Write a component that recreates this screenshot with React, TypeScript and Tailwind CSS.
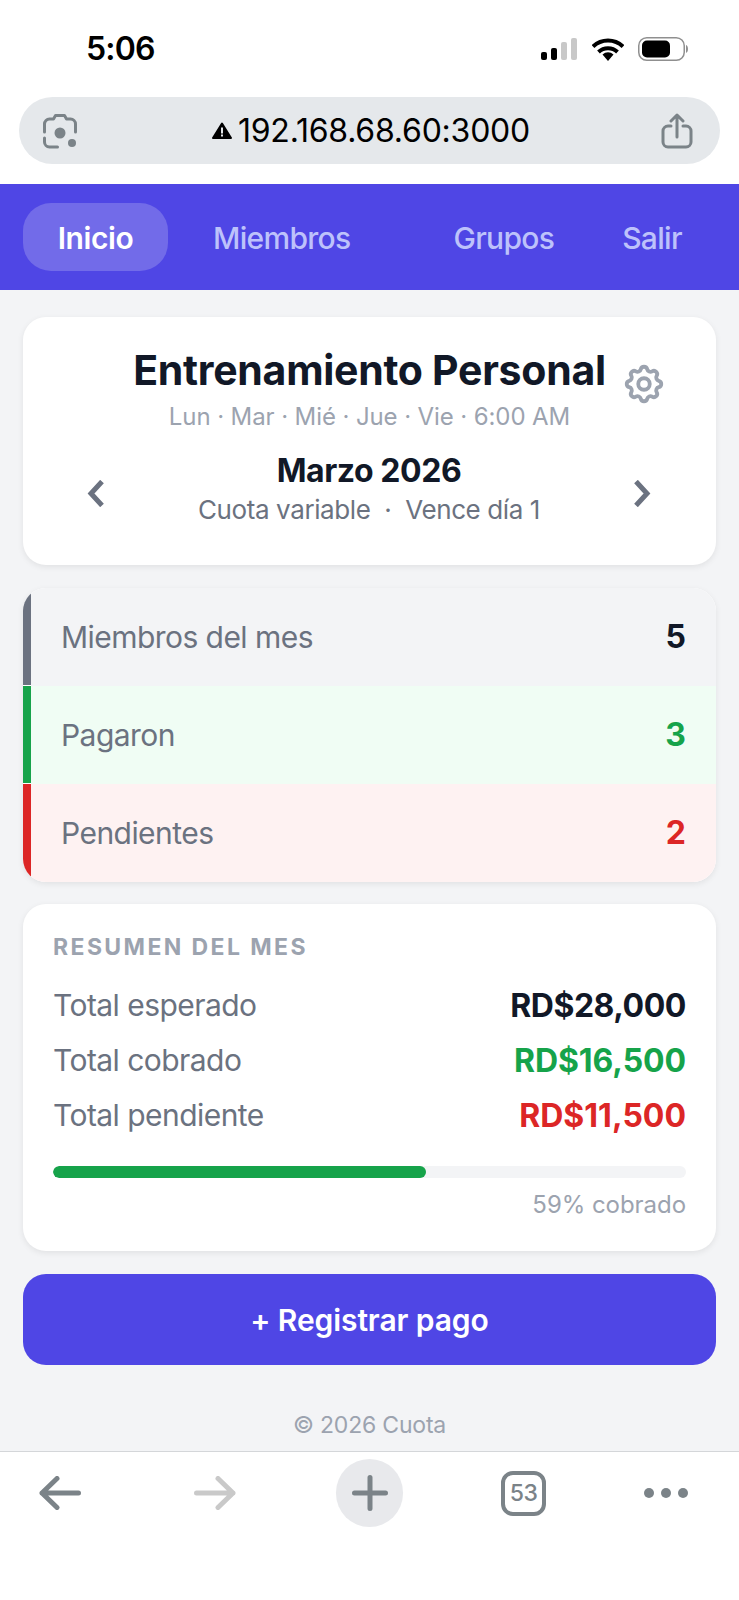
import { HiOutlineCog } from "react-icons/hi";

function Row({ label, value, bar, bg, color }: { label: string; value: string; bar: string; bg: string; color: string }) {
  return (
    <div className="flex h-[98px] bg-white">
      <div className={`h-[97px] w-[8px] ${bar}`} />
      <div className={`flex flex-1 justify-between pl-[30px] pr-[30px] pt-[31px] ${bg}`}>
        <span className="text-[30px] leading-[36px] tracking-[-0.55px] text-[#6b7280]">{label}</span>
        <span className={`text-[32px] leading-[36px] font-bold ${color}`}>{value}</span>
      </div>
    </div>
  );
}

function Total({ label, value, color }: { label: string; value: string; color: string }) {
  return (
    <div className="flex h-[55px] items-center justify-between">
      <span className="text-[30px] tracking-[-0.55px] text-[#6b7280]">{label}</span>
      <span className={`text-[32px] font-bold ${color}`}>{value}</span>
    </div>
  );
}

export default function App() {
  return (
    <div className="relative flex h-[1600px] w-[739px] flex-col overflow-hidden bg-[#f3f4f6] font-['Inter',sans-serif]">
      <div className="bg-white">
        <div className="flex h-[97px] items-center justify-between pl-[86px] pr-[51px] pt-[1px]">
          <span className="text-[32px] font-semibold tracking-[-0.8px] text-black">5:06</span>
          <div className="flex items-center">
            <svg width="36" height="24" viewBox="0 0 36 24">
              <rect x="0" y="15" width="6" height="8" rx="2" fill="#000" />
              <rect x="10" y="11" width="6" height="12" rx="2" fill="#000" />
              <rect x="20" y="5" width="6" height="18" rx="2" fill="#c8c8c8" />
              <rect x="30" y="1" width="6" height="22" rx="2" fill="#c8c8c8" />
            </svg>
            <svg className="ml-[15px]" width="32" height="24" viewBox="0 0 32 24">
              <path d="M16 24l-5.500-6.500a8 8 0 0 1 11 0z" fill="#000" />
              <path d="M1 9.500a21.500 21.500 0 0 1 30 0M6.500 15a14 14 0 0 1 19 0" stroke="#000" strokeWidth="4" fill="none" />
            </svg>
            <svg className="ml-[14px]" width="50" height="24" viewBox="0 0 50 24">
              <rect x="0.750" y="0.750" width="45.500" height="22.500" rx="8" fill="none" stroke="#8f8f8f" strokeWidth="1.500" />
              <rect x="4" y="3.500" width="28" height="17" rx="5" fill="#000" />
              <path d="M48 8c1.400.6 2 2.200 2 4s-.6 3.400-2 4z" fill="#8f8f8f" />
            </svg>
          </div>
        </div>
        <div className="mx-[19px] flex h-[67px] items-center justify-between rounded-[34px] bg-[#e5e8eb] pl-[23px] pr-[27px]">
          <svg width="36" height="36" viewBox="0 0 36 36" fill="none" stroke="#7b8388" strokeWidth="3" strokeLinecap="round" strokeLinejoin="round">
            <path d="M2.500 19v-8a5 5 0 0 1 5-5h4l2-3.500h9l2 3.500h4a5 5 0 0 1 5 5v8" />
            <path d="M2.500 25v4a5 5 0 0 0 5 5h8" />
            <circle cx="18" cy="20" r="5.500" fill="#7b8388" stroke="none" />
            <circle cx="30" cy="30" r="4" fill="#7b8388" stroke="none" />
          </svg>
          <div className="ml-[3px] flex items-center gap-[6px]">
            <svg width="20" height="17" viewBox="0 0 20 17">
              <path d="M10 1.500 19 16H1z" fill="#000" stroke="#000" strokeWidth="2" strokeLinejoin="round" />
              <rect x="9" y="5.500" width="2" height="6" fill="#e5e8eb" />
              <rect x="9" y="12.500" width="2" height="2" fill="#e5e8eb" />
            </svg>
            <span className="text-[32px] tracking-[-0.22px] text-black">192.168.68.60:3000</span>
          </div>
          <svg width="32" height="36" viewBox="0 0 32 36" fill="none" stroke="#7b8388" strokeWidth="3" strokeLinecap="round" strokeLinejoin="round">
            <path d="M10 13H7a5 5 0 0 0-5 5v11a5 5 0 0 0 5 5h18a5 5 0 0 0 5-5V18a5 5 0 0 0-5-5h-3" />
            <path d="M16 24V2M10 8l6-6 6 6" />
          </svg>
        </div>
        <div className="h-[20px]" />
      </div>

      <nav className="flex h-[106px] items-center bg-[#4f46e5] px-[23px] text-[30px] font-medium tracking-[-0.7px] text-[#bdc2fb]">
        <span className="flex h-[68px] w-[145px] items-center justify-center rounded-[28px] bg-[#726be9] pt-[2px] font-semibold tracking-[-0.4px] text-white">Inicio</span>
        <span className="ml-[45px] pt-[2px]">Miembros</span>
        <span className="ml-[103px] pt-[2px]">Grupos</span>
        <span className="ml-[68px] pt-[2px]">Salir</span>
      </nav>

      <main className="flex flex-1 flex-col gap-[22px] px-[23px] pt-[27px]">
        <section className="mb-[1px] h-[248px] rounded-[23px] bg-white shadow-[0_2px_6px_rgba(0,0,0,0.08)]">
          <div className="relative flex flex-col items-center pt-[28px]">
            <h1 className="text-[41px] leading-[50px] font-bold tracking-[-0.28px] text-[#111827]">Entrenamiento Personal</h1>
            <HiOutlineCog className="absolute left-[598px] top-[44px] text-[#9ca3af]" size={46} />
            <p className="mt-[8px] text-[24px] leading-[28px] tracking-[-0.1px] text-[#9ca3af]">Lun · Mar · Mié · Jue · Vie · 6:00 AM</p>
          </div>
          <div className="mt-[20px] flex items-center justify-between pl-[63px] pr-[64px]">
            <svg className="mt-[6px]" width="18" height="27" viewBox="0 0 18 27" fill="none" stroke="#6b7280" strokeWidth="5">
              <path d="M16 1.500 5 13.500l11 12" />
            </svg>
            <div className="flex flex-col items-center">
              <span className="text-[32px] leading-[40px] font-bold tracking-[-0.45px] text-[#111827]">Marzo 2026</span>
              <span className="whitespace-pre text-[26px] leading-[38px] tracking-[-0.4px] text-[#6b7280]">Cuota variable  ·  Vence día 1</span>
            </div>
            <svg className="mt-[6px]" width="18" height="27" viewBox="0 0 18 27" fill="none" stroke="#6b7280" strokeWidth="5">
              <path d="m2 1.500 11 12-11 12" />
            </svg>
          </div>
        </section>

        <section className="overflow-hidden rounded-[23px] shadow-[0_2px_6px_rgba(0,0,0,0.08)]">
          <Row label="Miembros del mes" value="5" bar="bg-[#6b7280]" bg="bg-[#f3f4f6]" color="text-[#111827]" />
          <Row label="Pagaron" value="3" bar="bg-[#16a34a]" bg="bg-[#f0fdf4]" color="text-[#16a34a]" />
          <Row label="Pendientes" value="2" bar="bg-[#dc2626]" bg="bg-[#fef2f2]" color="text-[#dc2626]" />
        </section>

        <section className="h-[347px] rounded-[23px] bg-white px-[30px] pt-[29px] shadow-[0_2px_6px_rgba(0,0,0,0.08)]">
          <h2 className="text-[23px] leading-[28px] font-bold tracking-[2.4px] text-[#9ca3af]">RESUMEN DEL MES</h2>
          <div className="mt-[17px]">
            <Total label="Total esperado" value="RD$28,000" color="tracking-[-0.45px] text-[#111827]" />
            <Total label="Total cobrado" value="RD$16,500" color="tracking-[-0.1px] text-[#16a34a]" />
            <Total label="Total pendiente" value="RD$11,500" color="tracking-[0px] text-[#dc2626]" />
          </div>
          <div className="mt-[23px] h-[12px] overflow-hidden rounded-full bg-[#f3f4f6]">
            <div className="h-full rounded-full bg-[#16a34a]" style={{ width: "59%" }} />
          </div>
          <p className="mt-[12px] text-right text-[24px] leading-[30px] tracking-[-0.05px] text-[#9ca3af]">59% cobrado</p>
        </section>

        <button className="mt-[1px] h-[91px] rounded-[23px] bg-[#4f46e5] pt-[2px] text-[30px] font-semibold tracking-[-0.1px] text-white">+ Registrar pago</button>

        <p className="mt-[24px] text-center text-[23px] leading-[28px] tracking-[-0.2px] text-[#9ca3af]">© 2026 Cuota</p>
      </main>

      <footer className="flex h-[149px] items-start border-t border-[#d4d6d9] bg-white pl-[39px] pt-[7px]">
        <div className="flex h-[68px] w-[42px] items-center justify-center">
          <svg width="42" height="34" viewBox="0 0 42 34" fill="none" stroke="#7b8388" strokeWidth="5" strokeLinecap="round" strokeLinejoin="round">
            <path d="M39.500 17H3M18 2.500 3 17l15 14.500" />
          </svg>
        </div>
        <div className="ml-[113px] flex h-[68px] w-[42px] items-center justify-center">
          <svg width="42" height="34" viewBox="0 0 42 34" fill="none" stroke="#c9c9c9" strokeWidth="5" strokeLinecap="round" strokeLinejoin="round">
            <path d="M2.500 17H39M24 2.500 39 17 24 31.500" />
          </svg>
        </div>
        <div className="ml-[100px] flex h-[68px] w-[67px] items-center justify-center rounded-full bg-[#e8e9ec]">
          <svg width="36" height="36" viewBox="0 0 36 36" fill="none" stroke="#7b8388" strokeWidth="5" strokeLinecap="round">
            <path d="M18 2.500v31M2.500 18h31" />
          </svg>
        </div>
        <div className="ml-[98px] mt-[12px] flex h-[45px] w-[45px] items-center justify-center rounded-[12px] border-[4px] border-[#7b8388] text-[23px] font-medium tracking-[-0.5px] text-[#7b8388]">53</div>
        <div className="ml-[98px] flex h-[68px] items-center gap-[7px]">
          <span className="h-[10px] w-[10px] rounded-full bg-[#7b8388]" />
          <span className="h-[10px] w-[10px] rounded-full bg-[#7b8388]" />
          <span className="h-[10px] w-[10px] rounded-full bg-[#7b8388]" />
        </div>
      </footer>
    </div>
  );
}
